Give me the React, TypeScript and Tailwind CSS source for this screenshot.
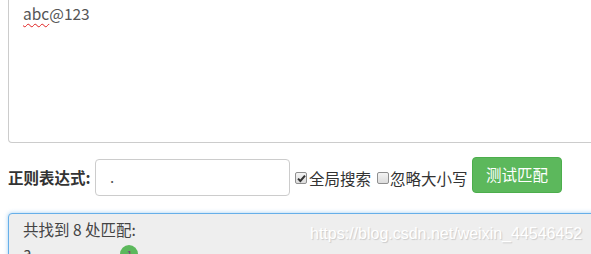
import React from "react";

function Check({ checked }: { checked?: boolean }) {
  return (
    <span className="inline-flex h-[12px] w-[12px] shrink-0 items-center justify-center rounded-[2px] border border-[#8f8f8f] bg-gradient-to-b from-[#f4f4f4] to-[#dcdcdc]">
      {checked ? (
        <svg width="9" height="9" viewBox="0 0 9 9">
          <path d="M1 4.6 L3.4 7 L8 1.6" fill="none" stroke="#333" strokeWidth="2" />
        </svg>
      ) : null}
    </span>
  );
}

export default function App() {
  return (
    <div
      className="relative h-[254px] w-[591px] overflow-hidden bg-white text-[#333]"
      style={{ fontFamily: '"Noto Sans CJK SC", "Noto Sans", sans-serif' }}
    >
      <div className="w-[640px] pl-2">
        {/* textarea */}
        <div className="h-[143px] rounded-b-[4px] border border-t-0 border-[#cccccc] pl-[14px] pt-[3px]">
          <div className="text-[15.5px] leading-[21px] text-[#555]">
            <span className="underline decoration-wavy decoration-[#e02020] decoration-1 underline-offset-[3px]">abc</span>
            @123
          </div>
        </div>

        {/* controls row */}
        <div className="mt-[16px] flex items-start">
          <span className="mt-[8px] w-[87px] text-[15.5px] font-bold leading-[20px] text-[#333]">正则表达式:</span>
          <div className="flex h-[37px] w-[195px] items-center rounded-[4px] border border-[#cccccc] pl-[14px] text-[15px] text-[#555]">
            .
          </div>
          <div className="ml-[5px] mt-[9px] flex items-center gap-[2px]">
            <Check checked />
            <span className="w-[68px] text-[15.5px] leading-[20px] text-[#333]">全局搜索</span>
          </div>
          <div className="mt-[9px] flex items-center gap-[1px]">
            <Check />
            <span className="w-[82px] text-[15.5px] leading-[20px] text-[#333]">忽略大小写</span>
          </div>
          <button className="mt-[-2px] flex h-[36px] w-[90px] items-center justify-center rounded-[4px] border border-[#4cae4c] bg-[#5cb85c] text-[15.5px] text-white">
            测试匹配
          </button>
        </div>

        {/* result panel */}
        <div className="mt-[17px] h-[60px] rounded-[4px] border border-[#66afe9] bg-[#eeeeee] pl-[14px] pt-[5px] shadow-[0_0_4px_rgba(102,175,233,0.6)]">
          <div className="text-[15.5px] leading-[20px] text-[#444]">共找到 8 处匹配:</div>
          <div className="relative mt-[4px] flex h-[20px] items-start text-[15px] leading-[20px] text-[#444]">
            <span>a</span>
            <span className="ml-[89px] mt-[2px] flex h-[18px] w-[18px] items-center justify-center rounded-full bg-[#5cb85c] text-[11px] text-[#7a3d7a]">
              1
            </span>
          </div>
        </div>
      </div>

      {/* watermark */}
      <div
        className="absolute left-[310px] top-[224px] text-[16px] leading-[20px] text-white"
        style={{ fontFamily: '"Liberation Sans", Arial, sans-serif', textShadow: "1px 1px 1px rgba(0,0,0,0.15)" }}
      >
        https://blog.csdn.net/weixin_44546452
      </div>
    </div>
  );
}
